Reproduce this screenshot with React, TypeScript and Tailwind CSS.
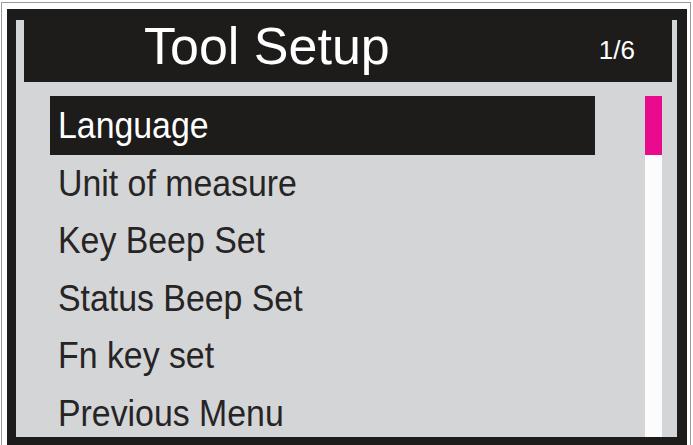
import React from "react"

const items = [
  "Language",
  "Unit of measure",
  "Key Beep Set",
  "Status Beep Set",
  "Fn key set",
  "Previous Menu",
]

const font = { fontFamily: '"Liberation Sans", Arial, Helvetica, sans-serif' }

export default function App() {
  const selected = 0

  return (
    <div className="h-[445px] w-[693px] overflow-hidden bg-white pl-px pt-[2px]" style={font}>
      {/* outer thin frame */}
      <div className="h-[470px] w-[690px] border border-[#9a9a9a] bg-white pl-[5px] pt-[6px]">
        {/* black bezel */}
        <div className="flex h-[445px] w-[680px] flex-col bg-[#1e1b1b] pb-[8px] pl-[9px] pr-[10px]">
          <div className="flex h-[428px] flex-col overflow-hidden border-t-[11px] border-[#1e1b1b] bg-[#d4d5d7]">
            {/* header */}
            <div className="relative -mt-[11px] ml-[8px] mr-[5px] flex h-[73px] shrink-0 items-center justify-between bg-[#1e1b1b] pl-[120px] pr-[37px]">
              <span className="text-[52px] leading-none text-white">Tool Setup</span>
              <span className="pt-[8px] text-[26px] leading-none text-white">1/6</span>
            </div>

            {/* menu + scrollbar */}
            <div className="mt-[14px] flex min-h-0 flex-1 pl-[34px] pr-[15px]">
              <ul className="w-[545px] shrink-0">
                {items.map((label, i) => (
                  <li
                    key={label}
                    className={
                      i === selected
                        ? "flex h-[59px] items-center bg-[#1e1b1b] pl-[8px] text-white"
                        : "flex h-[57.5px] items-center pl-[8px] text-[#262424]"
                    }
                  >
                    <span className="inline-block origin-left scale-x-[0.94] whitespace-nowrap text-[36px] leading-none">
                      {label}
                    </span>
                  </li>
                ))}
              </ul>
              <div className="ml-auto flex w-[17px] flex-col bg-[#fcfcfc]">
                <div className="h-[59px] bg-[#ea0a8c]" />
              </div>
            </div>
          </div>
        </div>
      </div>
    </div>
  )
}
